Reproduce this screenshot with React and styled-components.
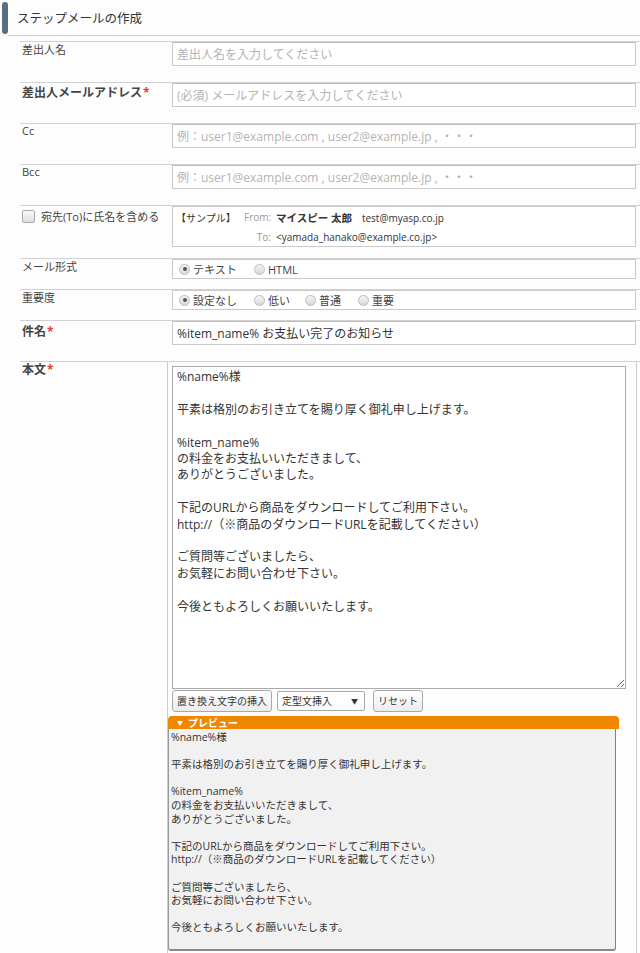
import React from 'react';
import styled, { createGlobalStyle } from 'styled-components';

const GlobalStyle = createGlobalStyle`
	html, body {
		margin: 0;
		padding: 0;
		background: #fdfdfd;
	}
	body {
		font-family: 'Open Sans', 'Noto Sans CJK JP', sans-serif;
		color: #333;
	}
`;

const BODY_TEXT = `%name%様

平素は格別のお引き立てを賜り厚く御礼申し上げます。

%item_name%
の料金をお支払いいただきまして、
ありがとうございました。

下記のURLから商品をダウンロードしてご利用下さい。
http://（※商品のダウンロードURLを記載してください）

ご質問等ございましたら、
お気軽にお問い合わせ下さい。

今後ともよろしくお願いいたします。`;

const Page = styled.div`
	width: 640px;
	height: 953px;
	overflow: hidden;
`;

const Header = styled.header`
	display: flex;
	align-items: stretch;
	height: 36px;
	padding-left: 2px;
`;

const HeaderBar = styled.span`
	width: 6px;
	margin: 2px 0 2px 0;
	border-radius: 3px;
	background: #5b6d82;
`;

const HeaderTitle = styled.h1`
	flex: 1;
	margin: 0;
	padding-left: 9px;
	display: flex;
	align-items: center;
	font-size: 12.5px;
	font-weight: 400;
	color: #333;
	border-bottom: 1px solid #cfcfcf;
`;

const Form = styled.div`
	margin-top: 5px;
	padding-left: 20px;
`;

const Row = styled.div`
	display: grid;
	grid-template-columns: 147px 1fr;
	border-top: 1px solid #d2d2d2;
	padding: 0 4px ${p => p.$pb}px 0;
`;

const Label = styled.div`
	display: flex;
	align-items: flex-start;
	padding: ${p => p.$pt ?? 1}px 0 0 2px;
	line-height: 14px;
	font-size: ${p => (p.$strong ? '12px' : '11px')};
	font-weight: ${p => (p.$strong ? 700 : 400)};
	color: #444;
`;

const Req = styled.span`
	color: #e43b3b;
	margin-left: 1px;
`;

const Field = styled.div`
	margin-left: 5px;
	height: ${p => p.$h}px;
	box-sizing: border-box;
	border: 1px solid #cacaca;
	border-top-color: #bdbdbd;
	background: #fff;
	display: flex;
	align-items: center;
	padding: 0 4px;
	font-size: 12px;
	color: ${p => (p.$placeholder ? '#b3b3b3' : '#333')};
	white-space: nowrap;
`;

const CheckLabel = styled.label`
	display: flex;
	align-items: center;
	gap: 6px;
	padding: 3px 0 0 2px;
	height: 14px;
	font-size: 11px;
	color: #444;
`;

const CheckBox = styled.span`
	width: 11px;
	height: 11px;
	border: 1px solid #a9a9a9;
	border-radius: 2px;
	background: linear-gradient(#fafafa, #dedede);
`;

const Sample = styled.div`
	margin-left: 5px;
	height: 41px;
	box-sizing: border-box;
	border: 1px solid #cacaca;
	background: #fff;
	display: grid;
	grid-template-columns: 68px 32px 1fr;
	grid-template-rows: 20px 20px;
	align-items: center;
	padding: 0 0 0 3px;
	font-size: 10px;
	color: #333;
`;

const SampleKey = styled.span`
	color: #999;
	text-align: right;
	padding-right: 5px;
	font-size: 10px;
`;

const SampleName = styled.span`
	font-weight: 700;
	font-size: 10.5px;
	margin-right: 10px;
`;

const RadioBox = styled.div`
	margin-left: 5px;
	height: 20px;
	box-sizing: border-box;
	border: 1px solid #cacaca;
	background: #fff;
	display: flex;
	align-items: center;
	padding-left: 6px;
`;

const RadioItem = styled.span`
	display: inline-flex;
	align-items: center;
	gap: 3px;
	font-size: 11px;
	color: #444;
	width: ${p => p.$w}px;
`;

const Radio = styled.span`
	position: relative;
	width: 9px;
	height: 9px;
	border-radius: 50%;
	border: 1px solid #bdbdbd;
	background: linear-gradient(#f4f4f4, #d8d8d8);
	&::after {
		content: '';
		display: ${p => (p.$on ? 'block' : 'none')};
		position: absolute;
		left: 2.5px;
		top: 2.5px;
		width: 4px;
		height: 4px;
		border-radius: 50%;
		background: #555;
	}
`;

const BodyBox = styled.div`
	border-left: 1px solid #cacaca;
	border-right: 1px solid #cacaca;
	padding: 4px 10px 20px 4px;
	height: 600px;
`;

const TextArea = styled.textarea`
	display: block;
	width: 454px;
	height: 323px;
	box-sizing: border-box;
	margin: 0;
	border: 1px solid #aaa;
	padding: 2px 4px;
	font-family: 'Open Sans', 'Noto Sans CJK JP', sans-serif;
	font-size: 12px;
	line-height: 16.4px;
	color: #333;
	background: #fff;
	resize: vertical;
	outline: none;
`;

const Tools = styled.div`
	display: flex;
	align-items: center;
	height: 23px;
	gap: 5px;
`;

const Button = styled.button`
	height: 22px;
	padding: 0 4px;
	border: 1px solid #a9a9a9;
	border-radius: 3px;
	background: linear-gradient(#fefefe, #ececec);
	font-family: inherit;
	font-size: 10px;
	color: #333;
	margin-left: ${p => p.$ml || 0}px;
`;

const Select = styled.div`
	width: 88px;
	height: 20px;
	box-sizing: border-box;
	border: 1px solid #a9a9a9;
	border-radius: 2px;
	background: #fff;
	display: flex;
	align-items: center;
	justify-content: space-between;
	padding: 0 6px 0 4px;
	font-size: 10px;
	color: #333;
	span:last-child {
		font-size: 7px;
	}
`;

const Preview = styled.section`
	margin: 4px 0 0 -4px;
	width: 451px;
`;

const PreviewHead = styled.div`
	height: 13px;
	background: #f08700;
	border-radius: 4px 4px 0 0;
	color: #fff;
	font-size: 10px;
	font-weight: 700;
	display: flex;
	align-items: center;
	padding-left: 9px;
	gap: 5px;
	line-height: 1;
	span:first-child {
		font-size: 6px;
	}
`;

const PreviewBody = styled.div`
	width: 448px;
	height: 222px;
	box-sizing: border-box;
	background: #f1f1f1;
	border: 1px solid #9a9a9a;
	border-top: none;
	border-right-color: #808080;
	border-bottom: 2px solid #8a8a8a;
	border-radius: 0 0 3px 3px;
	padding: 2px 2px;
	font-size: 10.5px;
	line-height: 13.6px;
	color: #333;
	white-space: pre-wrap;
`;

const TextRow = ({ label, strong, required, value, placeholder, pt }) => (
	<Row $pb={16}>
		<Label $strong={strong} $pt={pt}>
			{label}
			{required && <Req>*</Req>}
		</Label>
		<Field $h={24} $placeholder={!!placeholder}>
			{value || placeholder}
		</Field>
	</Row>
);

export default function App() {
	return (
		<Page>
			<GlobalStyle />
			<Header>
				<HeaderBar />
				<HeaderTitle>ステップメールの作成</HeaderTitle>
			</Header>
			<Form>
				<TextRow label='差出人名' placeholder='差出人名を入力してください' />
				<TextRow label='差出人メールアドレス' strong required pt={3} placeholder='(必須) メールアドレスを入力してください' />
				<TextRow label='Cc' pt={0} placeholder='例：user1@example.com , user2@example.jp , ・・・' />
				<TextRow label='Bcc' pt={0} placeholder='例：user1@example.com , user2@example.jp , ・・・' />
				<Row $pb={11}>
					<CheckLabel>
						<CheckBox />
						宛先(To)に氏名を含める
					</CheckLabel>
					<Sample>
						<span>【サンプル】</span>
						<SampleKey>From:</SampleKey>
						<span>
							<SampleName>マイスピー 太郎</SampleName>
							test@myasp.co.jp
						</span>
						<span />
						<SampleKey>To:</SampleKey>
						<span>&lt;yamada_hanako@example.co.jp&gt;</span>
					</Sample>
				</Row>
				<Row $pb={10}>
					<Label>メール形式</Label>
					<RadioBox>
						<RadioItem $w={75}>
							<Radio $on />
							テキスト
						</RadioItem>
						<RadioItem>
							<Radio />
							HTML
						</RadioItem>
					</RadioBox>
				</Row>
				<Row $pb={10}>
					<Label>重要度</Label>
					<RadioBox>
						<RadioItem $w={75}>
							<Radio $on />
							設定なし
						</RadioItem>
						<RadioItem $w={51}>
							<Radio />
							低い
						</RadioItem>
						<RadioItem $w={53}>
							<Radio />
							普通
						</RadioItem>
						<RadioItem>
							<Radio />
							重要
						</RadioItem>
					</RadioBox>
				</Row>
				<TextRow label='件名' strong required pt={4} value='%item_name% お支払い完了のお知らせ' />
				<Row $pb={0}>
					<Label $strong $pt={1}>
						本文<Req>*</Req>
					</Label>
					<BodyBox>
						<TextArea readOnly value={BODY_TEXT} />
						<Tools>
							<Button>置き換え文字の挿入</Button>
							<Select>
								<span>定型文挿入</span>
								<span>▼</span>
							</Select>
							<Button $ml={3}>リセット</Button>
						</Tools>
						<Preview>
							<PreviewHead>
								<span>▼</span>
								<span>プレビュー</span>
							</PreviewHead>
							<PreviewBody>{BODY_TEXT}</PreviewBody>
						</Preview>
					</BodyBox>
				</Row>
			</Form>
		</Page>
	);
}
